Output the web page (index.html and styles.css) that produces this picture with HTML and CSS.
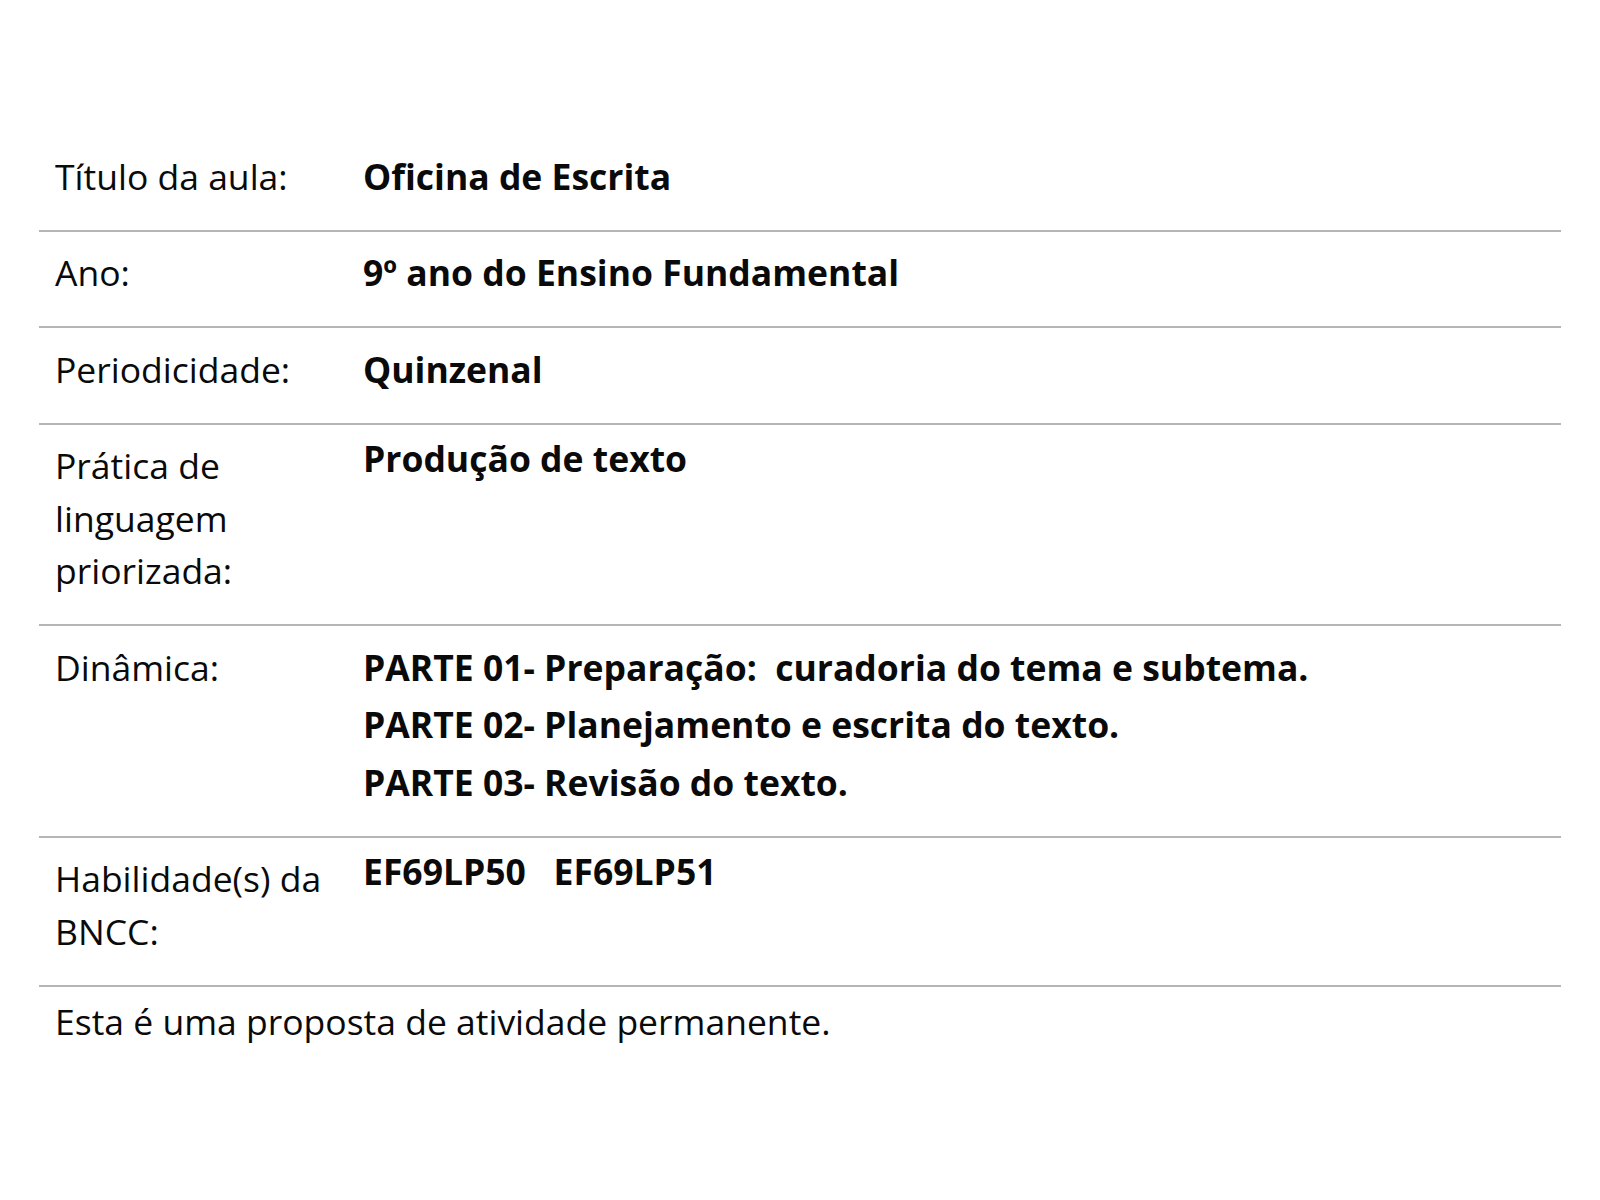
FILE: index.html
```html
<!DOCTYPE html>
<html lang="pt-BR">
<head>
<meta charset="utf-8">
<title>Oficina de Escrita</title>
<link rel="stylesheet" href="styles.css">
</head>
<body>
<main class="sheet">
  <div class="row">
    <div class="label">Título da aula:</div>
    <div class="value"><p>Oficina de Escrita</p></div>
  </div>
  <div class="row">
    <div class="label">Ano:</div>
    <div class="value"><p>9º ano do Ensino Fundamental</p></div>
  </div>
  <div class="row">
    <div class="label">Periodicidade:</div>
    <div class="value"><p>Quinzenal</p></div>
  </div>
  <div class="row row--tall">
    <div class="label">Prática de linguagem priorizada:</div>
    <div class="value"><p>Produção de texto</p></div>
  </div>
  <div class="row">
    <div class="label">Dinâmica:</div>
    <div class="value value--list">
      <p>PARTE 01- Preparação:&nbsp; curadoria do tema e subtema.</p>
      <p>PARTE 02- Planejamento e escrita do texto.</p>
      <p>PARTE 03- Revisão do texto.</p>
    </div>
  </div>
  <div class="row row--tall">
    <div class="label">Habilidade(s) da BNCC:</div>
    <div class="value"><p>EF69LP50&nbsp;&nbsp; EF69LP51</p></div>
  </div>
  <p class="note">Esta é uma proposta de atividade permanente.</p>
</main>
</body>
</html>
```

FILE: styles.css
```css
html, body {
  margin: 0;
  padding: 0;
  background: #ffffff;
}

body {
  font-family: "Open Sans", "Noto Sans", sans-serif;
  font-size: 35.5px;
  line-height: 52.5px;
  color: #0a0a0a;
}

.sheet {
  width: 1522px;
  margin: 135px 0 0 39px;
}

.row {
  display: grid;
  grid-template-columns: 324px 1fr;
  align-items: start;
  padding: 14.5px 0 27.5px;
  border-bottom: 2px solid #b5b5b5;
}

.label {
  padding: 0 16px;
  font-weight: 400;
}

.value {
  font-weight: 700;
}

.value p {
  margin: 0;
}

.value--list {
  display: flex;
  flex-direction: column;
  gap: 5px;
}

.row--tall .value {
  margin-top: -7px;
}

.note {
  margin: 0;
  padding: 8px 16px 0;
}
```
